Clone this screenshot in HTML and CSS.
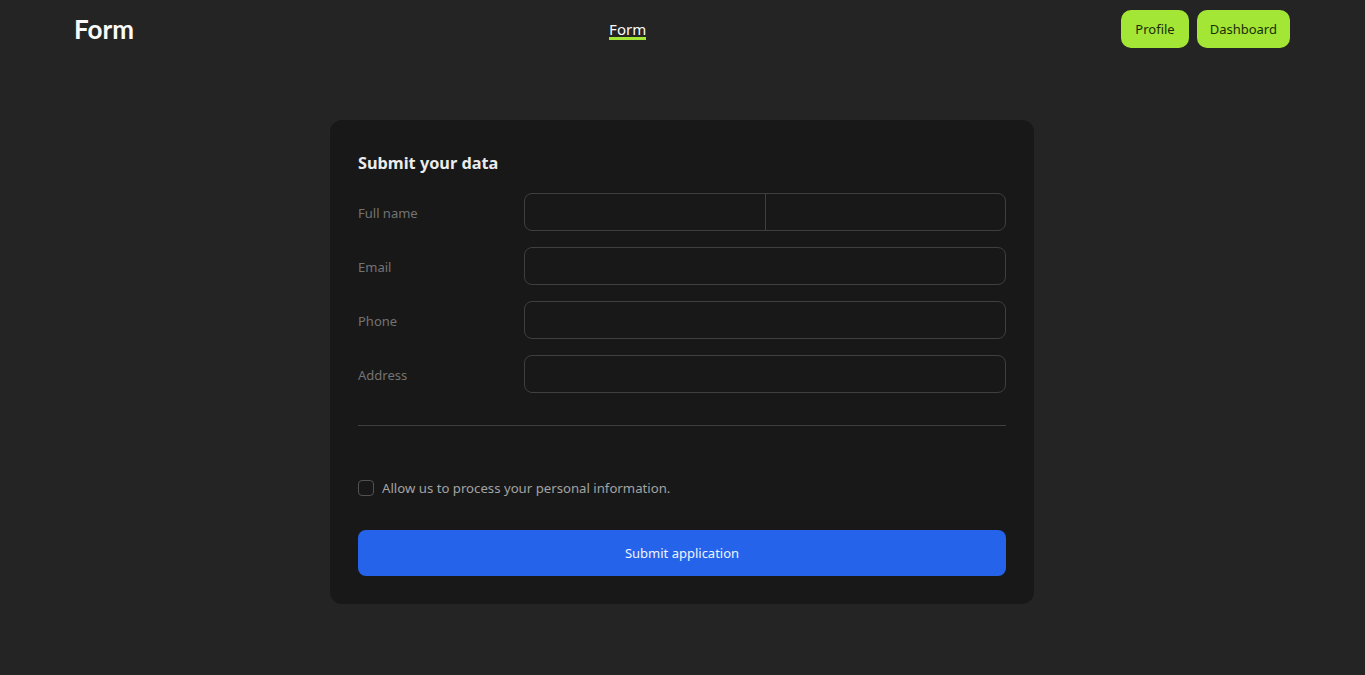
FILE: index.html
```html
<!DOCTYPE html>
<html lang="en">
<head>
<meta charset="utf-8">
<title>Form</title>
<link rel="stylesheet" href="styles.css">
</head>
<body>
<header class="header">
  <div class="header-inner">
    <a class="logo" href="#">Form</a>
    <nav class="nav"><a class="nav-link" href="#">Form</a></nav>
    <div class="actions">
      <button class="pill">Profile</button>
      <button class="pill">Dashboard</button>
    </div>
  </div>
</header>
<main class="main">
  <form class="card">
    <h2 class="card-title">Submit your data</h2>
    <div class="fields">
      <div class="row">
        <label class="label">Full name</label>
        <div class="input split"><span class="half"></span><span class="half"></span></div>
      </div>
      <div class="row">
        <label class="label">Email</label>
        <div class="input"></div>
      </div>
      <div class="row">
        <label class="label">Phone</label>
        <div class="input"></div>
      </div>
      <div class="row">
        <label class="label">Address</label>
        <div class="input"></div>
      </div>
    </div>
    <hr class="sep">
    <label class="check"><span class="box"></span><span class="check-text">Allow us to process your personal information.</span></label>
    <button type="button" class="submit">Submit application</button>
  </form>
</main>
</body>
</html>
```
FILE: styles.css
```css
* { box-sizing: border-box; }
html, body { margin: 0; padding: 0; }
body {
  background: #242424;
  font-family: "Noto Sans", "Open Sans", sans-serif;
  color: #e5e5e5;
  min-height: 675px;
}
.header-inner {
  max-width: 1281px;
  margin: 0 auto;
  padding: 10px 33px 10px 32px;
  display: flex;
  align-items: center;
  justify-content: space-between;
  height: 58px;
}
.logo {
  font-family: Lato, sans-serif;
  font-weight: 700;
  font-size: 26px;
  color: #fafafa;
  text-decoration: none;
}
.nav-link {
  color: #fafafa;
  font-size: 15px;
  text-decoration: none;
  border-bottom: 3px solid #a3e635;
  line-height: 16px;
  display: inline-block;
}
.actions { display: flex; gap: 8px; }
.pill {
  background: #a3e635;
  color: #1a2e05;
  border: none;
  border-radius: 10px;
  height: 38px;
  padding: 0 13px;
  font-family: "Noto Sans", sans-serif;
  font-size: 13px;
}
.pill:first-child { padding: 0 14px; }
.main {
  display: flex;
  justify-content: center;
  padding-top: 62px;
  padding-right: 1px;
}
.card {
  width: 704px;
  background: #181818;
  border-radius: 12px;
  padding: 28px 28px 28px;
}
.card-title {
  margin: 3px 0 18px;
  font-size: 16.3px;
  font-weight: 700;
  color: #ececec;
  line-height: 24px;
}
.fields { display: flex; flex-direction: column; gap: 16px; }
.row { display: flex; align-items: center; }
.label {
  width: 166px;
  font-size: 13px;
  color: #737373;
  padding-top: 2px;
}
.input {
  flex: 1;
  height: 38px;
  border: 1px solid #3f3f3f;
  border-radius: 8px;
  background: #181818;
}
.split { display: flex; }
.half { flex: 1; }
.half + .half { border-left: 1px solid #3f3f3f; }
.sep {
  border: none;
  border-top: 1px solid #3f3f3f;
  margin: 32px 0 53px;
}
.check { display: flex; align-items: center; gap: 8px; }
.box {
  width: 16px; height: 16px;
  border: 1px solid #525252;
  border-radius: 4px;
}
.check-text { font-size: 13.2px; color: #a3a3a3; }
.submit {
  margin-top: 33px;
  width: 100%;
  height: 46px;
  border: none;
  border-radius: 8px;
  background: #2563eb;
  color: #f0f4ff;
  font-family: "Noto Sans", sans-serif;
  font-size: 13px;
}
```
